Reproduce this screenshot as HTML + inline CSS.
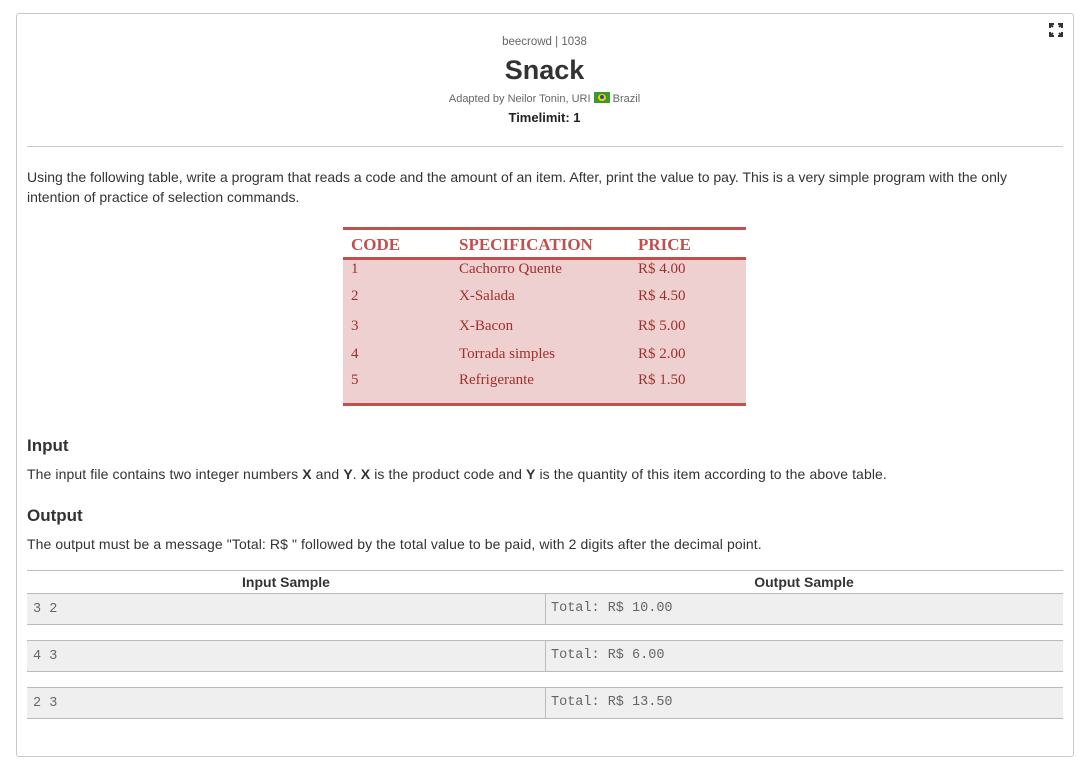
<!DOCTYPE html>
<html><head><style>
body{margin:0;background:#fff;font-family:"Liberation Sans",sans-serif;color:#333;}
.box{position:absolute;left:16px;top:13px;width:1056px;height:742px;border:1px solid #c8c8c8;border-radius:3px;}
.a{position:absolute;white-space:nowrap;}
.c{left:0;width:1089px;text-align:center;}
.t{position:absolute;font-family:"Liberation Serif",serif;color:#a0302c;font-size:15px;}
.h{font-weight:bold;color:#c0504d;font-size:17px;}
.row{position:absolute;left:27px;width:1036px;height:30px;background:#efefef;border-top:1px solid #bbb;border-bottom:1px solid #bbb;}
.row div{position:absolute;top:1px;height:30px;line-height:30px;font-family:"Liberation Mono",monospace;font-size:13.5px;color:#666;}
</style></head><body>
<div class="box"></div>
<svg class="a" style="left:1049px;top:23px" width="14" height="14" viewBox="0 0 14 14" fill="none" stroke="#333" stroke-width="2"><path d="M1 5V1h4M9 1h4v4M13 9v4H9M5 13H1V9M1 1l3 3M13 1l-3 3M13 13l-3-3M1 13l3-3"/></svg>
<div class="a c" style="top:36px;font-size:11.5px;color:#666">beecrowd | 1038</div>
<div class="a c" style="top:55px;font-size:27px;font-weight:bold;color:#333">Snack</div>
<div class="a c" style="top:92px;font-size:11px;color:#666">Adapted by Neilor Tonin, URI <span style="display:inline-block;width:16px;height:11px;background:#3a9a2c;vertical-align:-1px;position:relative"><span style="position:absolute;left:4px;top:2px;width:8px;height:7px;background:#f4d400;border-radius:50%"></span><span style="position:absolute;left:6px;top:3px;width:4px;height:4px;background:#2b4aa0;border-radius:50%"></span></span> Brazil</div>
<div class="a c" style="top:110px;font-size:13px;font-weight:bold;color:#222">Timelimit: 1</div>
<div class="a" style="left:27px;top:146px;width:1036px;height:1px;background:#ccc"></div>
<div class="a" style="left:27px;top:167px;width:1036px;white-space:normal;font-size:14px;line-height:20px;color:#333">Using the following table, write a program that reads a code and the amount of an item. After, print the value to pay. This is a very simple program with the only intention of practice of selection commands.</div>
<div class="a" style="left:343px;top:227px;width:403px;height:3px;background:#c0504d"></div>
<div class="a" style="left:343px;top:257px;width:403px;height:143px;background:#efd0d0;border-top:3px solid #c0504d;border-bottom:3px solid #c0504d"></div>
<div class="t h" style="left:351px;top:235px">CODE</div>
<div class="t h" style="left:459px;top:235px">SPECIFICATION</div>
<div class="t h" style="left:638px;top:235px">PRICE</div>
<div class="t" style="left:351px;top:261px">1</div><div class="t" style="left:459px;top:261px">Cachorro Quente</div><div class="t" style="left:638px;top:261px">R$ 4.00</div>
<div class="t" style="left:351px;top:288px">2</div><div class="t" style="left:459px;top:288px">X-Salada</div><div class="t" style="left:638px;top:288px">R$ 4.50</div>
<div class="t" style="left:351px;top:318px">3</div><div class="t" style="left:459px;top:318px">X-Bacon</div><div class="t" style="left:638px;top:318px">R$ 5.00</div>
<div class="t" style="left:351px;top:346px">4</div><div class="t" style="left:459px;top:346px">Torrada simples</div><div class="t" style="left:638px;top:346px">R$ 2.00</div>
<div class="t" style="left:351px;top:372px">5</div><div class="t" style="left:459px;top:372px">Refrigerante</div><div class="t" style="left:638px;top:372px">R$ 1.50</div>
<div class="a" style="left:27px;top:436px;font-size:17px;font-weight:bold;color:#333">Input</div>
<div class="a" style="left:27px;top:466px;font-size:14px;letter-spacing:0.1px">The input file contains two integer numbers <b>X</b> and <b>Y</b>. <b>X</b> is the product code and <b>Y</b> is the quantity of this item according to the above table.</div>
<div class="a" style="left:27px;top:506px;font-size:17px;font-weight:bold;color:#333">Output</div>
<div class="a" style="left:27px;top:536px;font-size:14px;letter-spacing:0.1px">The output must be a message "Total: R$ " followed by the total value to be paid, with 2 digits after the decimal point.</div>
<div class="a" style="left:27px;top:570px;width:1036px;height:1px;background:#bbb"></div>
<div class="a" style="left:27px;top:574px;width:518px;text-align:center;font-size:14px;font-weight:bold">Input Sample</div>
<div class="a" style="left:545px;top:574px;width:518px;text-align:center;font-size:14px;font-weight:bold">Output Sample</div>
<div class="row" style="top:593px"><div style="left:6px">3 2</div><div style="left:518px;border-left:1px solid #bbb;padding-left:5px;top:0">Total: R$ 10.00</div></div>
<div class="row" style="top:640px"><div style="left:6px">4 3</div><div style="left:518px;border-left:1px solid #bbb;padding-left:5px;top:0">Total: R$ 6.00</div></div>
<div class="row" style="top:687px"><div style="left:6px">2 3</div><div style="left:518px;border-left:1px solid #bbb;padding-left:5px;top:0">Total: R$ 13.50</div></div>
</body></html>
